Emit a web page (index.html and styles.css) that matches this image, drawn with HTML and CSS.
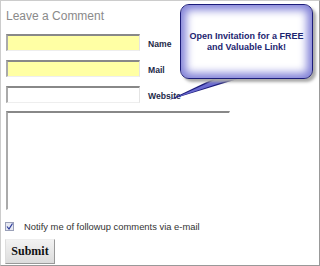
FILE: index.html
```html
<!DOCTYPE html>
<html lang="en">
<head>
    <meta charset="UTF-8">
    <title>Leave a Comment</title>
    <link rel="stylesheet" href="styles.css">
</head>
<body>
    <div class="frame">
        <h3 class="title">Leave a Comment</h3>

        <form class="comment-form">
            <div class="field">
                <input type="text" class="text-input filled">
                <label class="field-label">Name</label>
            </div>
            <div class="field">
                <input type="text" class="text-input filled">
                <label class="field-label">Mail</label>
            </div>
            <div class="field">
                <input type="text" class="text-input">
                <label class="field-label">Website</label>
            </div>

            <textarea class="comment-box"></textarea>

            <div class="notify">
                <span class="check">
                    <svg width="7" height="7" viewBox="0 0 7 7"><path d="M1 3.5 L3 6 L6.5 0.5" fill="none" stroke="#2a3a9a" stroke-width="1.2"/></svg>
                </span>
                <span class="notify-text">Notify me of followup comments via e-mail</span>
            </div>

            <button type="button" class="submit-btn">Submit</button>
        </form>

        <div class="callout">
            <svg class="callout-tail" width="100" height="30" viewBox="0 0 100 30">
                <polygon points="46,2 72,2 0,24" fill="#1c1c7a"/>
                <polygon points="50,2 66,2 6,22" fill="#6a6ad0"/>
            </svg>
            <div class="callout-body">
                <p>Open Invitation for a FREE<br>and Valuable Link!</p>
            </div>
        </div>
    </div>
</body>
</html>
```

FILE: styles.css
```css
body {
    margin: 0;
    background: #fff;
    font-family: "Liberation Sans", Arial, sans-serif;
}
.frame {
    position: relative;
    width: 320px;
    height: 266px;
    box-sizing: border-box;
    border: 1px solid #999;
    border-color: #ccc #999 #999 #ccc;
    padding: 8px 0 0 5px;
}
.title {
    margin: 0 0 11px 0;
    font-size: 12px;
    line-height: 14px;
    font-weight: normal;
    color: #8a8a8a;
}
.comment-form {
    display: flex;
    flex-direction: column;
    align-items: flex-start;
}
.field {
    display: flex;
    align-items: center;
    gap: 8px;
    margin-bottom: 9px;
}
.text-input {
    width: 134px;
    height: 17px;
    box-sizing: border-box;
    margin: 0;
    padding: 0;
    background: #fff;
    border-style: solid;
    border-width: 2px 1px 1px 2px;
    border-color: #888 #e4e4e4 #eee #aaa;
}
.text-input.filled {
    background: #ffffa4;
}
.field-label {
    font-size: 8.6px;
    font-weight: bold;
    color: #1c2a48;
    padding-top: 3px;
}
.comment-box {
    width: 224px;
    height: 99px;
    box-sizing: border-box;
    margin: -1px 0 0 0;
    padding: 0;
    resize: none;
    border-style: solid;
    border-width: 2px 1px 1px 2px;
    border-color: #888 #fff #fff #aaa;
}
.notify {
    display: flex;
    align-items: center;
    gap: 10px;
    margin: 11px 0 0 -1px;
}
.check {
    display: flex;
    align-items: center;
    justify-content: center;
    width: 9px;
    height: 9px;
    box-sizing: border-box;
    border: 1px solid #9aa0b8;
    background: #e6e8f2;
}
.notify-text {
    font-size: 9.4px;
    color: #333;
}
.submit-btn {
    margin: 7px 0 0 -1px;
    width: 50px;
    height: 25px;
    padding: 0;
    font-family: "Liberation Serif", "Times New Roman", serif;
    font-size: 12px;
    font-weight: bold;
    color: #111;
    background: linear-gradient(#f2f2f2, #dcdcdc);
    border: 1px solid #bbb;
    border-color: #eee #999 #999 #ddd;
}
.callout {
    position: absolute;
    left: 179px;
    top: 3px;
    width: 133px;
    height: 75px;
}
.callout-body {
    position: absolute;
    inset: 0;
    box-sizing: border-box;
    border: 1px solid #1c1c7a;
    border-radius: 9px;
    background: #fff;
    box-shadow: inset 0 0 9px 5px #8282d8, 3px 3px 3px #aaa;
    display: flex;
    align-items: center;
    justify-content: center;
}
.callout-body p {
    margin: 0;
    text-align: center;
    font-size: 9px;
    line-height: 11px;
    font-weight: bold;
    color: #1c2470;
}
.callout-tail {
    position: absolute;
    left: -11px;
    top: 72px;
}
```
